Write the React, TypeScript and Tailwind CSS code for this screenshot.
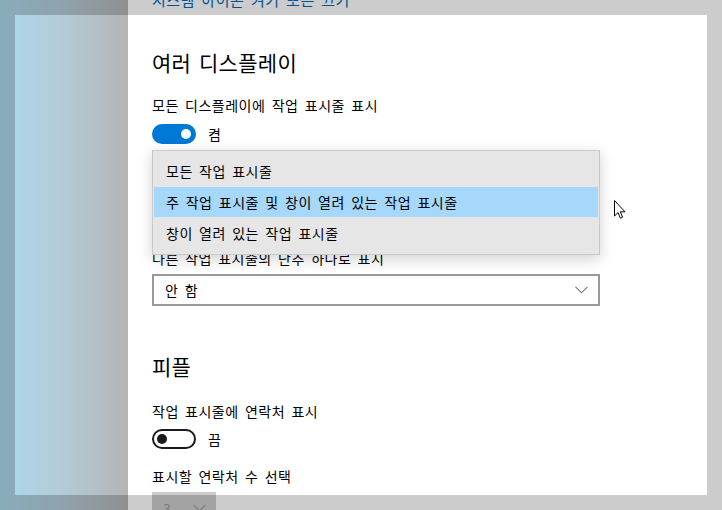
import React from "react";

function Chevron({ color = "#6e6e6e" }: { color?: string }) {
  return (
    <svg width="13" height="8" viewBox="0 0 13 8" fill="none">
      <path d="M0.5 0.8 L6.5 6.8 L12.5 0.8" stroke={color} strokeWidth="1.1" />
    </svg>
  );
}

function ToggleOn() {
  return (
    <div className="w-[44px] h-[20px] rounded-full bg-[#0078d7] flex items-center justify-end pr-[5px]">
      <div className="w-[10px] h-[10px] rounded-full bg-white" />
    </div>
  );
}

function ToggleOff() {
  return (
    <div className="w-[44px] h-[20px] rounded-full border-2 border-[#1a1a1a] flex items-center pl-[3px] bg-white">
      <div className="w-[10px] h-[10px] rounded-full bg-[#1a1a1a]" />
    </div>
  );
}

export default function App() {
  return (
    <div className="relative w-[722px] h-[510px] overflow-hidden bg-white flex font-['Noto_Sans_CJK_KR','Noto_Sans',sans-serif] text-black tracking-[0.5px] [word-spacing:2.7px]">
      <div className="w-[128px] shrink-0 bg-linear-to-r from-[#acd7ec] via-[#b3cbd6] to-[#b4b4b4]" />
      <div className="flex-1 bg-white pl-6">
        <div className="flex flex-col mt-[-10px]">
          <div className="h-5 leading-5 text-[15px] text-[#0067b8]">시스템 아이콘 켜기 또는 끄기</div>

          <div className="mt-[38px] h-7 leading-7 text-[21px] tracking-[0.3px]">여러 디스플레이</div>

          <div className="mt-[19px] h-5 leading-5 text-[14px]">모든 디스플레이에 작업 표시줄 표시</div>

          <div className="mt-[9px] flex items-center gap-3 h-5">
            <ToggleOn />
            <span className="text-[14px] leading-5">켬</span>
          </div>

          <div className="mt-[10px] h-5 leading-5 text-[14px]">작업 표시줄 단추 표시 위치</div>

          <div className="relative mt-[12px] w-[448px]">
            <div className="h-8 border-2 border-[#999999] flex items-center justify-between pl-[11px] pr-[10px] text-[14px]">
              <span>주 작업 표시줄 및 창이 열려 있는 작업 표시줄</span>
              <Chevron />
            </div>
            <div className="absolute left-0 right-0 top-[-36px] h-[105px] border border-[#c9c9c9] bg-[#e6e6e6] pt-1 shadow-[0_4px_14px_rgba(0,0,0,0.18)] z-10">
              <div className="my-px mx-px h-[30px] flex items-center pl-3 text-[14px]">모든 작업 표시줄</div>
              <div className="my-px mx-px h-[30px] flex items-center pl-3 text-[14px] bg-[#a6d8fc]">
                주 작업 표시줄 및 창이 열려 있는 작업 표시줄
              </div>
              <div className="my-px mx-px h-[30px] flex items-center pl-3 text-[14px]">창이 열려 있는 작업 표시줄</div>
            </div>
          </div>

          <div className="mt-[30px] h-5 leading-5 text-[14px]">다른 작업 표시줄의 단추 하나로 표시</div>

          <div className="mt-[6px] w-[448px] h-8 border-2 border-[#999999] flex items-center justify-between pl-[11px] pr-[10px] text-[14px]">
            <span>안 함</span>
            <Chevron color="#767676" />
          </div>

          <div className="mt-[46px] h-7 leading-7 text-[21px] tracking-[0.3px]">피플</div>

          <div className="mt-[21px] h-5 leading-5 text-[14px]">작업 표시줄에 연락처 표시</div>

          <div className="mt-[8px] flex items-center gap-3 h-5">
            <ToggleOff />
            <span className="text-[14px] leading-5">끔</span>
          </div>

          <div className="mt-[17px] h-5 leading-5 text-[14px]">표시할 연락처 수 선택</div>

          <div className="mt-[6px] w-[64px] h-8 bg-[#cccccc] flex items-center justify-between pl-[11px] pr-[10px] text-[14px] text-[#999999]">
            <span>3</span>
            <Chevron color="#999999" />
          </div>
        </div>
      </div>

      <div className="absolute left-[15px] top-[15px] w-[692px] h-[480px] shadow-[0_0_0_1200px_rgba(0,0,0,0.2)] pointer-events-none z-20" />

      <svg className="absolute left-[613px] top-[199px] z-30" width="14" height="22" viewBox="0 0 14 22">
        <path
          d="M1.5 1.5 L1.5 17 L5 13.6 L7.4 19.2 L9.6 18.2 L7.3 12.8 L12 12.8 Z"
          fill="#ffffff"
          stroke="#000000"
          strokeWidth="1"
          strokeLinejoin="miter"
        />
      </svg>
    </div>
  );
}
